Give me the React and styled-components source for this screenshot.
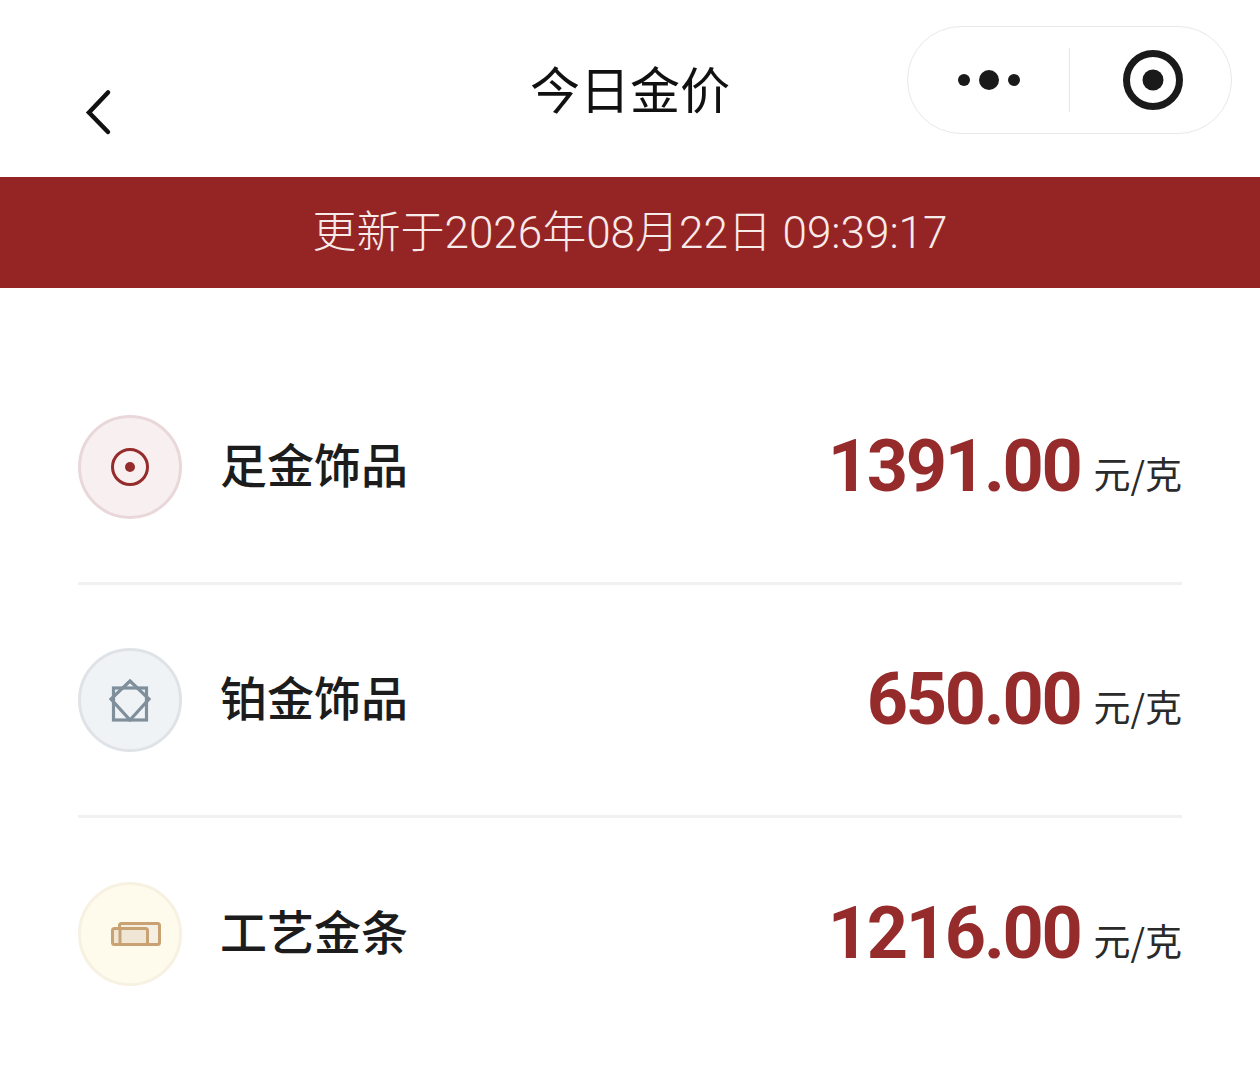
import styled, { createGlobalStyle } from 'styled-components'

const GlobalStyle = createGlobalStyle`
  html, body {
    margin: 0;
    background: #fff;
    font-family: "Noto Sans", "Noto Sans CJK SC", sans-serif;
  }
`

const Page = styled.div`
  width: 1260px;
  height: 1071px;
  overflow: hidden;
  background: #fff;
`

const Header = styled.header`
  height: 177px;
  box-sizing: border-box;
  display: grid;
  grid-template-columns: 1fr auto 1fr;
  padding: 26px 28px 0;
`

const BackButton = styled.div`
  padding: 60px 0 0 50px;
  svg { display: block; }
`

const Title = styled.h1`
  margin: 0;
  padding-top: 26px;
  font-family: "Noto Sans CJK SC", sans-serif;
  font-size: 50px;
  line-height: 70px;
  font-weight: 400;
  color: #111;
`

const Capsule = styled.div`
  justify-self: end;
  width: 325px;
  height: 108px;
  box-sizing: border-box;
  border: 1px solid #e8e8e8;
  border-radius: 54px;
  display: flex;
  align-items: center;
`

const CapsulePart = styled.div`
  flex: 1 1 0;
  height: 64px;
  display: flex;
  align-items: center;
  justify-content: center;
  svg { margin-left: ${(p) => p.$shift || 0}px; }
`

const CapsuleDivider = styled.div`
  width: 1px;
  height: 64px;
  background: #e6e6e6;
`

const Banner = styled.div`
  height: 111px;
  box-sizing: border-box;
  padding-bottom: 8px;
  display: flex;
  align-items: center;
  justify-content: center;
  background: #952524;
  color: #f7ebea;
  font-family: Roboto, "Noto Sans CJK SC", sans-serif;
  font-size: 44px;
  font-weight: 300;
`

const List = styled.main`
  padding: 64px 78px 0;
`

const Row = styled.section`
  height: ${(p) => (p.$last ? 235 : 233)}px;
  box-sizing: border-box;
  display: flex;
  align-items: center;
  border-bottom: 3px solid ${(p) => (p.$last ? 'transparent' : '#f1f1f1')};
`

const Badge = styled.div`
  width: 104px;
  height: 104px;
  box-sizing: border-box;
  border-radius: 50%;
  border: 3px solid ${(p) => p.$edge};
  background: ${(p) => p.$fill};
  display: flex;
  align-items: center;
  justify-content: center;
`

const Name = styled.div`
  margin-left: 38px;
  padding-bottom: 10px;
  flex: 1;
  font-family: "Noto Sans CJK SC", sans-serif;
  font-size: 47px;
  font-weight: 500;
  color: #1c1c1c;
`

const Price = styled.div`
  font-family: Roboto, sans-serif;
  font-size: 72px;
  line-height: 1;
  font-weight: 700;
  letter-spacing: -2.3px;
  color: #952b2b;
`

const Unit = styled.div`
  margin-left: 13px;
  padding-top: 12px;
  font-family: "Noto Sans CJK SC", sans-serif;
  font-size: 37px;
  color: #2a2a2a;
`

const RingIcon = () => (
  <svg width="40" height="40" viewBox="0 0 40 40">
    <circle cx="20" cy="20" r="17.5" fill="none" stroke="#952b2b" strokeWidth="3" />
    <circle cx="20" cy="20" r="5" fill="#952b2b" />
  </svg>
)

const DiamondIcon = () => (
  <svg width="44" height="44" viewBox="0 0 44 44">
    <g fill="none" stroke="#7f8f9c" strokeWidth="3.2">
      <rect x="5.5" y="10" width="33" height="32" />
      <path d="M22 3 L41 21 L22 42 L3 21 Z" />
    </g>
  </svg>
)

const BarIcon = () => (
  <svg width="62" height="24" viewBox="0 0 62 24">
    <rect x="20.5" y="1.5" width="40" height="21" rx="2" fill="#f5eee2" stroke="#c9a273" strokeWidth="3" />
    <rect x="13.5" y="6.5" width="35" height="16" rx="2" fill="#f0e6d6" stroke="#c9a273" strokeWidth="3" />
    <path d="M21 7 V22" stroke="#c9a273" strokeWidth="3" />
  </svg>
)

const rows = [
  { name: '足金饰品', price: '1391.00', edge: '#e9d7da', fill: '#f8eff0', icon: <RingIcon /> },
  { name: '铂金饰品', price: '650.00', edge: '#dfe3e7', fill: '#f0f3f6', icon: <DiamondIcon /> },
  { name: '工艺金条', price: '1216.00', edge: '#f7f1e2', fill: '#fefaec', icon: <BarIcon /> },
]

export default function App() {
  return (
    <Page>
      <GlobalStyle />
      <Header>
        <BackButton>
          <svg width="40" height="52" viewBox="0 0 40 52">
            <path d="M30 6.5 L11 26.5 L30 46" fill="none" stroke="#111" strokeWidth="4.5" strokeLinecap="round" strokeLinejoin="miter" />
          </svg>
        </BackButton>
        <Title>今日金价</Title>
        <Capsule>
          <CapsulePart>
            <svg width="66" height="24" viewBox="0 0 66 24">
              <circle cx="8" cy="12" r="6" fill="#1a1a1a" />
              <circle cx="33" cy="12" r="10" fill="#1a1a1a" />
              <circle cx="58" cy="12" r="6" fill="#1a1a1a" />
            </svg>
          </CapsulePart>
          <CapsuleDivider />
          <CapsulePart $shift={5}>
            <svg width="60" height="60" viewBox="0 0 60 60">
              <circle cx="30" cy="30" r="26.5" fill="none" stroke="#1a1a1a" strokeWidth="7" />
              <circle cx="30" cy="30" r="10.5" fill="#1a1a1a" />
            </svg>
          </CapsulePart>
        </Capsule>
      </Header>
      <Banner>更新于2026年08月22日 09:39:17</Banner>
      <List>
        {rows.map((r, i) => (
          <Row key={r.name} $last={i === rows.length - 1}>
            <Badge $edge={r.edge} $fill={r.fill}>{r.icon}</Badge>
            <Name>{r.name}</Name>
            <Price>{r.price}</Price>
            <Unit>元/克</Unit>
          </Row>
        ))}
      </List>
    </Page>
  )
}
